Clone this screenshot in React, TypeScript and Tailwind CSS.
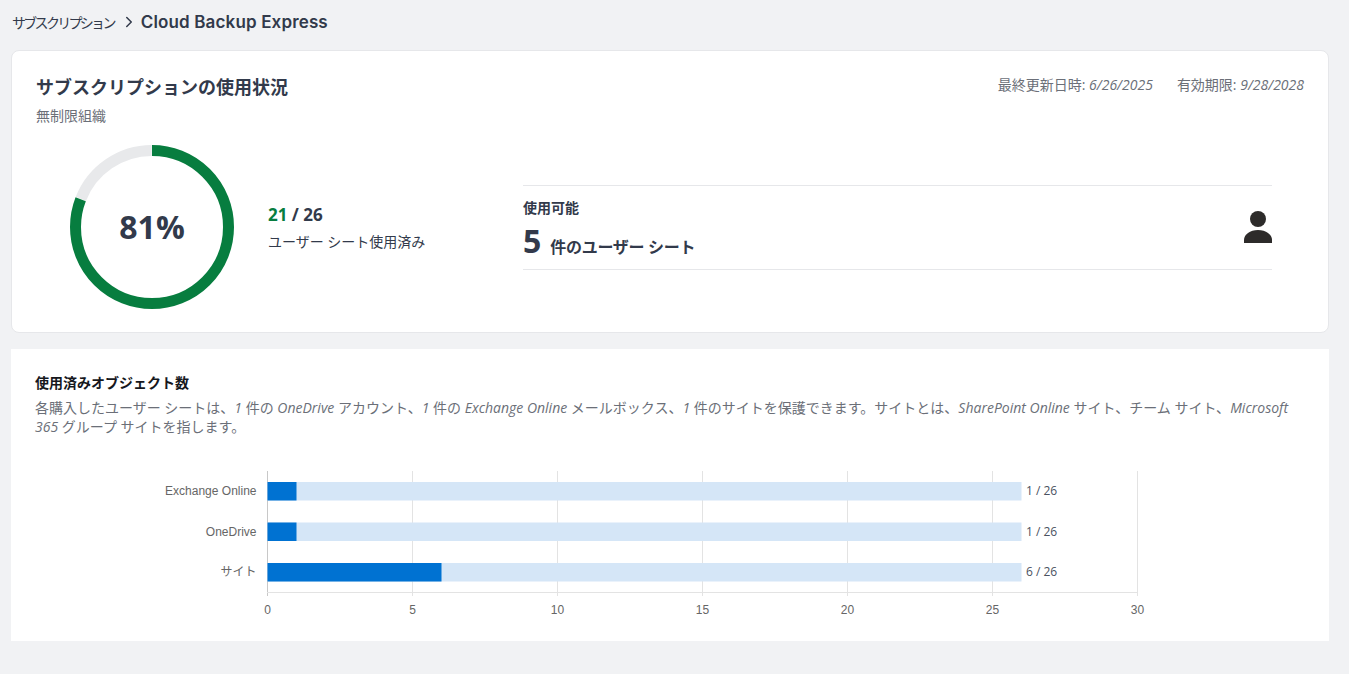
import { ChevronRight } from 'lucide-react'

const bars = [
  { label: 'Exchange Online', used: 1, y: 482 },
  { label: 'OneDrive', used: 1, y: 522.5 },
  { label: 'サイト', used: 6, y: 563 },
]
const ticks = [0, 5, 10, 15, 20, 25, 30]
const chartFont = '"Liberation Sans", "Noto Sans CJK JP", sans-serif'

function Donut() {
  const r = 76.5
  const c = 2 * Math.PI * r
  const usedShare = 21 / 26
  return (
    <svg width="166" height="166" viewBox="0 0 166 166" className="block">
      <circle
        cx="83"
        cy="83"
        r={r}
        fill="none"
        stroke="#e8e9eb"
        strokeWidth="11"
        strokeDasharray={`${c * (1 - usedShare) - 1.5} ${c}`}
        transform={`rotate(${usedShare * 360 - 90 + 0.8} 83 83)`}
      />
      <circle
        cx="83"
        cy="83"
        r={r}
        fill="none"
        stroke="#077d3f"
        strokeWidth="11"
        strokeDasharray={`${c * usedShare} ${c}`}
        transform="rotate(-90 83 83)"
      />
    </svg>
  )
}

function UsageChart() {
  const x = (v: number) => 267.5 + v * 29
  return (
    <svg width="1318" height="180" viewBox="11 460 1318 180" className="block">
      {ticks.map((t) => (
        <g key={t}>
          <line x1={x(t)} x2={x(t)} y1="471" y2="596" stroke={t === 0 ? '#c8c8c8' : '#e3e3e3'} />
          <text x={x(t)} y="614" textAnchor="middle" fontSize="12" fill="#666666" fontFamily={chartFont}>
            {t}
          </text>
        </g>
      ))}
      <line x1="267" x2="1138" y1="592.5" y2="592.5" stroke="#e3e3e3" />
      {bars.map((b) => (
        <g key={b.label}>
          <rect x={x(0)} y={b.y} width={26 * 29} height="18.5" fill="#d5e6f7" />
          <rect x={x(0)} y={b.y} width={b.used * 29} height="18.5" fill="#0072d2" />
          <text x="256.5" y={b.y + 13} textAnchor="end" fontSize="12" fill="#666666" fontFamily={chartFont}>
            {b.label}
          </text>
          <text
            x="1026"
            y={b.y + 13}
            fontSize="12"
            fill="#4a5160"
            fontFamily='"Open Sans", sans-serif'
          >
            {b.used} / 26
          </text>
        </g>
      ))}
    </svg>
  )
}

export default function App() {
  return (
    <div className="min-h-[674px] bg-[#f1f2f4] px-[11px] pt-[11px] pr-[20px] font-['Open_Sans','Noto_Sans_CJK_JP',sans-serif] text-[#323a4b]">
      <div className="flex h-[22px] items-center">
        <span className="ml-[1px] text-[14px] tracking-[-2.7px] text-[#323a4b]">サブスクリプション</span>
        <ChevronRight size={18} className="ml-[6px] mr-[3px] text-[#323a4b]" />
        <span className="translate-y-[1px] font-['Inter',sans-serif] text-[17px] font-semibold tracking-[0.15px]">Cloud Backup Express</span>
      </div>

      <div className="mt-[17px] h-[283px] rounded-lg border border-[#e6e7ea] bg-white pt-[24px] pl-[24px] pr-[24px]">
        <div className="flex items-start justify-between">
          <div>
            <h1 className="text-[18px] font-bold leading-[24px]">サブスクリプションの使用状況</h1>
            <div className="mt-[7px] text-[14px] leading-[20px] text-[#6b6f78]">無制限組織</div>
          </div>
          <div className="flex gap-[24px] text-[14px] leading-[20px] text-[#6b6f78]">
            <span>
              最終更新日時: <i>6/26/2025</i>
            </span>
            <span>
              有効期限: <i>9/28/2028</i>
            </span>
          </div>
        </div>

        <div className="mt-[18px] flex items-center">
          <div className="relative ml-[33px] h-[166px] w-[166px]">
            <Donut />
            <div className="absolute inset-0 flex items-center justify-center text-[32px] font-bold">81%</div>
          </div>
          <div className="ml-[33px] w-[255px]">
            <div className="text-[17px] font-bold leading-[24px]">
              <span className="text-[#077d3f]">21</span> / 26
            </div>
            <div className="mt-[5px] text-[14px] leading-[20px]">ユーザー シート使用済み</div>
          </div>
          <div className="flex h-[85px] w-[749px] items-center justify-between border-y border-[#e6e7ea]">
            <div className="pt-[5px]">
              <div className="text-[14px] font-bold leading-[18px]">使用可能</div>
              <div className="mt-[5px] flex items-baseline">
                <span className="text-[32px] font-bold leading-[38px]">5</span>
                <span className="ml-[9px] text-[16px] font-bold tracking-[-0.3px]">件のユーザー シート</span>
              </div>
            </div>
            <svg width="28" height="32" viewBox="0 0 28 32" fill="#2d2b2a">
              <circle cx="14" cy="8" r="8" />
              <path d="M0 32v-3C0 23.500 6 19 14 19s14 4.500 14 10v3z" />
            </svg>
          </div>
        </div>
      </div>

      <div className="mt-[16px] h-[292px] bg-white">
        <div className="px-[24px] pt-[24px]">
          <h2 className="text-[14px] font-bold leading-[20px] text-[#16181d]">使用済みオブジェクト数</h2>
          <p className="mt-[5px] text-[14px] leading-[19px] text-[#6b6f78]">
            各購入したユーザー シートは、<i>1</i> 件の <i>OneDrive</i> アカウント、<i>1</i> 件の <i>Exchange Online</i> メールボックス、<i>1</i> 件のサイトを保護できます。サイトとは、<i>SharePoint Online</i> サイト、チーム サイト、<i>Microsoft 365</i> グループ サイトを指します。
          </p>
        </div>
        <div className="mt-[24px]">
          <UsageChart />
        </div>
      </div>
    </div>
  )
}
